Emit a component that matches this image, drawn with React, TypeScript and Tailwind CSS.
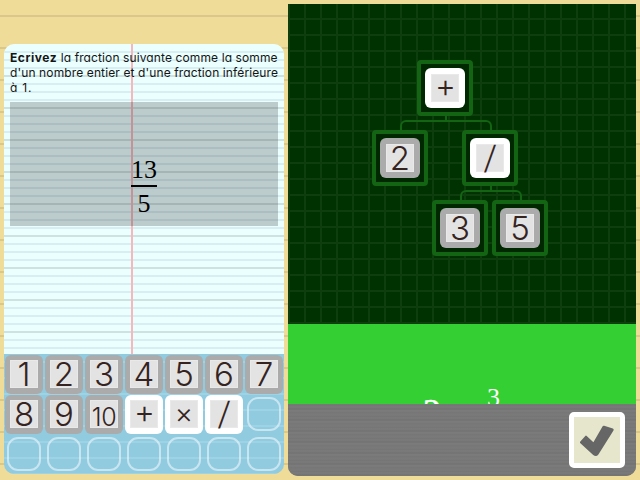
import React from "react";

type KeyKind = "digit" | "operator";

const gothic =
  "font-['URW_Gothic','Century_Gothic',Inter,sans-serif] font-light text-[#352322]";

function glyphClass(label: string) {
  if (label === "10") return "text-[25px] tracking-[-0.4px] translate-y-[3px]";
  if (label === "+") return "text-[32px] translate-x-[0.5px] translate-y-[-2px]";
  if (label === "×") return "text-[28px] translate-y-[-1.5px]";
  if (label === "/") return "text-[32px] translate-x-[0.5px] skew-x-[-5deg]";
  return "text-[33px]";
}

function Glyph({ label }: { label: string }) {
  return (
    <span className={`block leading-none whitespace-nowrap ${glyphClass(label)}`}>
      {label}
    </span>
  );
}

function Key({ label, kind }: { label: string; kind: KeyKind }) {
  const edge = kind === "digit" ? "bg-[#ababab]" : "bg-white";
  return (
    <div className="flex h-10 w-10 items-center justify-center">
      <div className={`flex h-[39px] w-[38px] items-center justify-center rounded-[6px] ${edge}`}>
        <div className={`flex h-7 w-7 items-center justify-center border border-[#e9e9e9] bg-[#e3e3e3] ${gothic}`}>
          <Glyph label={label} />
        </div>
      </div>
    </div>
  );
}

function EmptySlot() {
  return (
    <div className="flex h-10 w-10 items-center justify-center">
      <div className="h-[34px] w-[34px] rounded-[11px] border-2 border-white/50" />
    </div>
  );
}

function TreeNode({ label, kind, place }: { label: string; kind: KeyKind; place: string }) {
  const edge = kind === "digit" ? "bg-[#ababab]" : "bg-white";
  return (
    <div
      className={`absolute flex h-14 w-14 items-center justify-center rounded-[4px] border-4 border-[#136513] bg-[#002800] ${place}`}
    >
      <div className={`flex h-10 w-10 items-center justify-center rounded-[6px] ${edge}`}>
        <div className={`flex h-7 w-7 items-center justify-center border border-[#e9e9e9] bg-[#e3e3e3] ${gothic}`}>
          <Glyph label={label} />
        </div>
      </div>
    </div>
  );
}

function Branch({ place, stem }: { place: string; stem: string }) {
  return (
    <>
      <div className={`absolute h-[10px] rounded-t-[6px] border-x-2 border-t-2 border-[#136513] ${place}`} />
      <div className={`absolute h-1 w-0.5 bg-[#136513] ${stem}`} />
    </>
  );
}

const keys: { label: string; kind: KeyKind }[] = [
  ...["1", "2", "3", "4", "5", "6", "7", "8", "9", "10"].map((label) => ({
    label,
    kind: "digit" as KeyKind,
  })),
  ...["+", "×", "/"].map((label) => ({ label, kind: "operator" as KeyKind })),
];

function Exercise() {
  return (
    <section className="mt-10 flex h-[430px] w-[280px] flex-col overflow-hidden rounded-[10px]">
      <div className="relative h-[310px] bg-[#ebffff] bg-[repeating-linear-gradient(to_bottom,transparent_0px,transparent_7px,#d7eef2_7px,#d7eef2_9px,transparent_9px,transparent_15px,#d7eef2_15px,#d7eef2_17px,transparent_17px,transparent_23px,#d7eef2_23px,#d7eef2_25px,transparent_25px,transparent_31px,#cfe2e2_31px,#cfe2e2_32px)] px-1.5 pt-1.5">
        <div className="absolute inset-y-0 left-0 w-full bg-[repeating-linear-gradient(to_bottom,#cfe2e2_0px,#cfe2e2_1px,transparent_1px,transparent_32px)] [clip-path:inset(2px_0_0_0)]" />
        <div className="absolute inset-y-0 left-[127px] w-0.5 bg-[#f7b7bd]" />
        <p className="relative h-[52px] text-[12px] leading-[15px] whitespace-nowrap text-[#151515] font-['URW_Gothic','Century_Gothic',Inter,sans-serif] [font-feature-settings:'cv11']">
          <span className="block tracking-[0.11px]">
            <b className="tracking-[0.55px]">Ecrivez</b> la fraction suivante comme la somme
          </span>
          <span className="block tracking-[0.12px]">d'un nombre entier et d'une fraction inférieure</span>
          <span className="block tracking-[0.8px]">à 1.</span>
        </p>
        <div className="relative flex h-[124px] w-[268px] flex-col items-center bg-black/20 pt-[54px] font-['Liberation_Serif',serif] text-[26px] leading-[28px] text-black">
          <span className="h-[29px]">13</span>
          <span className="h-0.5 w-[26px] bg-black" />
          <span className="mt-[3px] h-7">5</span>
        </div>
      </div>
      <div className="grid h-[120px] grid-cols-7 bg-[#90cbe0] bg-[repeating-linear-gradient(to_bottom,transparent_0px,transparent_7px,#9dd3e5_7px,#9dd3e5_9px,transparent_9px,transparent_16px)]">
        {keys.map((key) => (
          <Key key={key.label} {...key} />
        ))}
        {Array.from({ length: 8 }, (_, i) => (
          <EmptySlot key={i} />
        ))}
      </div>
    </section>
  );
}

function Board() {
  return (
    <section className="flex h-[472px] w-[348px] flex-col overflow-hidden rounded-b-[10px]">
      <div className="relative h-80 bg-[#003100] bg-[linear-gradient(to_right,#0e3d0e_2px,transparent_2px),linear-gradient(to_bottom,transparent_14px,#0e3d0e_14px)] bg-[size:16px_16px]">
        <Branch place="left-[112px] top-[116px] w-[92px]" stem="left-[157px] top-[112px]" />
        <Branch place="left-[172px] top-[186px] w-[62px]" stem="left-[202px] top-[182px]" />
        <TreeNode label="+" kind="operator" place="left-[129px] top-[56px]" />
        <TreeNode label="2" kind="digit" place="left-[84px] top-[126px]" />
        <TreeNode label="/" kind="operator" place="left-[174px] top-[126px]" />
        <TreeNode label="3" kind="digit" place="left-[144px] top-[196px]" />
        <TreeNode label="5" kind="digit" place="left-[204px] top-[196px]" />
      </div>
      <div className="flex h-20 items-start overflow-hidden bg-[#33cf33] font-['Liberation_Serif',serif] text-white">
        <span className="ml-[135px] mt-[70px] w-[17px] text-[36px] leading-[36px] [-webkit-text-stroke:0.6px_white]">2</span>
        <span className="ml-[47px] mt-[61px] text-[26px] leading-[26px]">3</span>
      </div>
      <div className="flex h-[72px] items-center justify-end bg-[#777777] bg-[repeating-linear-gradient(to_bottom,#7d7d7d_0px,#747474_1px,#7b7b7b_3px,#727272_5px,#7e7e7e_7px,#767676_8px,#7a7a7a_11px)] pr-[11px]">
        <button
          aria-label="Valider"
          className="flex h-14 w-14 items-center justify-center rounded-[5px] border-[5px] border-white bg-[#e6e6cc]"
        >
          <svg viewBox="0 0 46 46" className="h-[46px] w-[46px]">
            <path
              d="M6.3 24.5 11.3 18.9Q12 18.3 12.7 19L19.4 25.2 28.5 9.6Q29 8.4 30.2 8.8L38.8 11.6Q40.2 12.1 39.5 13.4L24.4 37.6Q22.1 40.4 19.2 38L6.4 26.3Q5.4 25.5 6.3 24.5Z"
              fill="#666666"
            />
          </svg>
        </button>
      </div>
    </section>
  );
}

export default function App() {
  return (
    <main className="flex h-[480px] w-[640px] gap-1 overflow-hidden bg-[#eedc98] bg-[repeating-linear-gradient(to_bottom,transparent_0px,transparent_15px,#dac88a_15px,#dac88a_17px,transparent_17px,transparent_32px)] p-1">
      <Exercise />
      <Board />
    </main>
  );
}
